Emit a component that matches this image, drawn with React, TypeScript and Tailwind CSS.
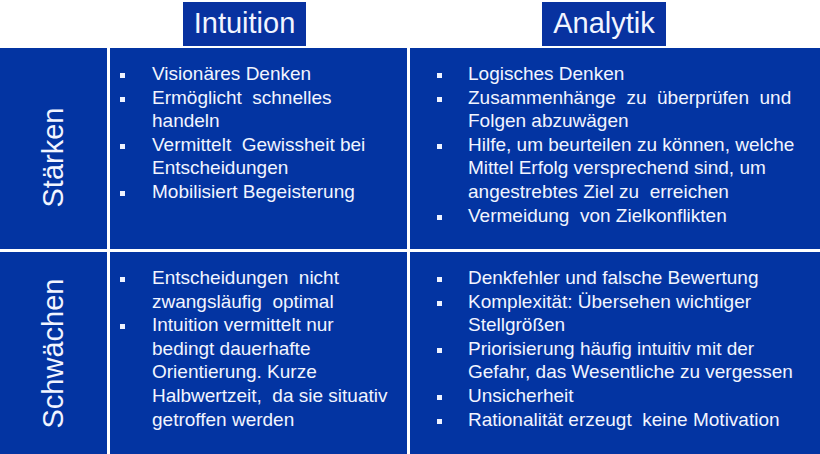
import React from 'react';

const strengthsIntuition = [
  'Visionäres Denken',
  'Ermöglicht  schnelles handeln',
  'Vermittelt  Gewissheit bei Entscheidungen',
  'Mobilisiert Begeisterung',
];

const strengthsAnalytik = [
  'Logisches Denken',
  'Zusammenhänge  zu  überprüfen  und Folgen abzuwägen',
  'Hilfe, um beurteilen zu können, welche Mittel Erfolg versprechend sind, um angestrebtes Ziel zu  erreichen',
  'Vermeidung  von Zielkonflikten',
];

const weaknessIntuition = [
  'Entscheidungen  nicht zwangsläufig  optimal',
  'Intuition vermittelt nur bedingt dauerhafte Orientierung. Kurze Halbwertzeit,  da sie situativ getroffen werden',
];

const weaknessAnalytik = [
  'Denkfehler und falsche Bewertung',
  'Komplexität: Übersehen wichtiger Stellgrößen',
  'Priorisierung häufig intuitiv mit der Gefahr, das Wesentliche zu vergessen',
  'Unsicherheit',
  'Rationalität erzeugt  keine Motivation',
];

function BulletList({ items, wide }: { items: string[]; wide?: boolean }) {
  return (
    <ul className={wide ? 'pl-[27px] pt-[14px]' : 'pl-[10px] pt-[14px]'}>
      {items.map((item) => (
        <li key={item} className="flex items-start text-[19px] leading-[23.6px]">
          <span className={wide ? 'w-[31px] shrink-0' : 'w-[32px] shrink-0'}>
            <span className="block w-[5px] h-[5px] mt-[11px] bg-[#eef2ff]" />
          </span>
          <span className={`${wide ? 'w-[340px]' : 'w-[240px]'} whitespace-pre-wrap`}>{item}</span>
        </li>
      ))}
    </ul>
  );
}

function SideLabel({ text, offset }: { text: string; offset?: boolean }) {
  return (
    <div className={`bg-[#0334a2] flex items-center justify-center ${offset ? 'pt-[18px]' : ''}`}>
      <span className="-rotate-90 whitespace-nowrap text-[29px] leading-none">{text}</span>
    </div>
  );
}

export default function App() {
  return (
    <div className="w-[820px] h-[454px] bg-white text-[#f2f5ff] font-['Liberation_Sans',Arial,sans-serif] overflow-hidden">
      {/* Column headers */}
      <div className="grid grid-cols-[107px_297px_410px] gap-x-[3px] h-[48px]">
        <div />
        <div className="pt-[2px]">
          <div className="ml-[73px] w-[123px] h-[44px] bg-[#0832a0] flex items-center justify-center text-[29px]">
            Intuition
          </div>
        </div>
        <div className="pt-[2px]">
          <div className="ml-[132px] w-[124px] h-[44px] bg-[#0832a0] flex items-center justify-center text-[29px]">
            Analytik
          </div>
        </div>
      </div>

      {/* Matrix */}
      <div className="grid grid-cols-[107px_297px_410px] grid-rows-[201px_203px] gap-[3px]">
        <SideLabel text="Stärken" offset />
        <div className="bg-[#0334a2]">
          <BulletList items={strengthsIntuition} />
        </div>
        <div className="bg-[#0334a2]">
          <BulletList items={strengthsAnalytik} wide />
        </div>

        <SideLabel text="Schwächen" />
        <div className="bg-[#0334a2]">
          <BulletList items={weaknessIntuition} />
        </div>
        <div className="bg-[#0334a2]">
          <BulletList items={weaknessAnalytik} wide />
        </div>
      </div>
    </div>
  );
}
